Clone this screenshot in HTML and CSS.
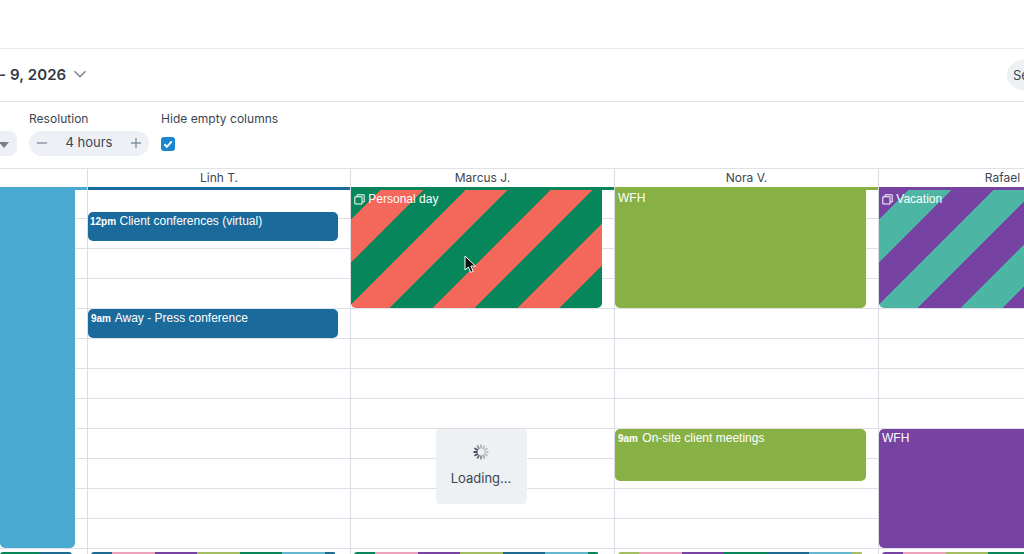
FILE: index.html
```html
<!DOCTYPE html>
<html lang="en">

<head>
    <meta charset="UTF-8">
    <meta name="viewport" content="width=device-width, initial-scale=1.0">
    <title>Schedule</title>
    <link rel="stylesheet" href="styles.css">
</head>

<body>
    <div class="top_bar"></div>

    <div class="title_bar">
        <div class="date_range">
            <span>- 9, 2026</span>
            <svg class="chevron" width="14" height="8" viewBox="0 0 14 8">
                <path d="M1.5 1.2 7 6.6l5.5-5.4" fill="none" stroke="#7c8894" stroke-width="1.5" />
            </svg>
        </div>
        <div class="search_pill">Se</div>
    </div>

    <div class="options">
        <div class="select_stub"><span class="caret"></span></div>
        <div class="option">
            <div class="option_label">Resolution</div>
            <div class="stepper">
                <svg width="12" height="12" viewBox="0 0 12 12">
                    <path d="M1 6h10" stroke="#8492a3" stroke-width="1.4" />
                </svg>
                <span class="stepper_value">4 hours</span>
                <svg width="12" height="12" viewBox="0 0 12 12">
                    <path d="M1 6h10M6 1v10" stroke="#8492a3" stroke-width="1.4" />
                </svg>
            </div>
        </div>
        <div class="option">
            <div class="option_label">Hide empty columns</div>
            <div class="checkbox">
                <svg width="10" height="10" viewBox="0 0 10 10">
                    <path d="M1.3 5.2 3.9 7.8 8.7 2.4" fill="none" stroke="#fff" stroke-width="2" />
                </svg>
            </div>
        </div>
    </div>

    <div class="schedule">
        <div class="col col_first">
            <div class="col_head"></div>
            <div class="col_body bar_sky">
                <div class="event full_left sky"></div>
                <div class="strip strip_first">
                    <span class="seg seg_end green"></span>
                    <span class="seg dark"></span>
                    <span class="seg seg_end light"></span>
                </div>
            </div>
        </div>

        <div class="col">
            <div class="col_head">Linh T.</div>
            <div class="col_body bar_blue">
                <div class="event short top_12pm blue"><b>12pm</b> Client conferences (virtual)</div>
                <div class="event short top_9am blue"><b>9am</b> Away - Press conference</div>
                <div class="strip">
                    <span class="seg seg_end dark"></span>
                    <span class="seg pink"></span>
                    <span class="seg purple"></span>
                    <span class="seg olive"></span>
                    <span class="seg green"></span>
                    <span class="seg light"></span>
                    <span class="seg seg_end dark"></span>
                </div>
            </div>
        </div>

        <div class="col">
            <div class="col_head">Marcus J.</div>
            <div class="col_body bar_green">
                <div class="event allday stripes_red">
                    <svg class="copy" width="11" height="11" viewBox="0 0 11 11">
                        <path d="M3 2.8V.8h7.2V8H8M.8 2.8H8V10H.8z" fill="none" stroke="#fff" stroke-width="1" />
                    </svg>
                    Personal day
                </div>
                <div class="strip">
                    <span class="seg seg_end green"></span>
                    <span class="seg pink"></span>
                    <span class="seg purple"></span>
                    <span class="seg olive"></span>
                    <span class="seg dark"></span>
                    <span class="seg light"></span>
                    <span class="seg seg_end green"></span>
                </div>
            </div>
            <div class="loading">
                <svg class="spinner" width="18" height="18" viewBox="0 0 18 18">
                    <g stroke="#2f3944" stroke-width="1.8">
                        <line x1="9" y1="1.5" x2="9" y2="5.5" opacity=".3" transform="rotate(0 9 9)" />
                        <line x1="9" y1="1.5" x2="9" y2="5.5" opacity=".25" transform="rotate(30 9 9)" />
                        <line x1="9" y1="1.5" x2="9" y2="5.5" opacity=".25" transform="rotate(60 9 9)" />
                        <line x1="9" y1="1.5" x2="9" y2="5.5" opacity=".25" transform="rotate(90 9 9)" />
                        <line x1="9" y1="1.5" x2="9" y2="5.5" opacity=".3" transform="rotate(120 9 9)" />
                        <line x1="9" y1="1.5" x2="9" y2="5.5" opacity=".4" transform="rotate(150 9 9)" />
                        <line x1="9" y1="1.5" x2="9" y2="5.5" opacity=".55" transform="rotate(180 9 9)" />
                        <line x1="9" y1="1.5" x2="9" y2="5.5" opacity=".7" transform="rotate(210 9 9)" />
                        <line x1="9" y1="1.5" x2="9" y2="5.5" opacity=".9" transform="rotate(240 9 9)" />
                        <line x1="9" y1="1.5" x2="9" y2="5.5" opacity="1" transform="rotate(270 9 9)" />
                        <line x1="9" y1="1.5" x2="9" y2="5.5" opacity=".85" transform="rotate(300 9 9)" />
                        <line x1="9" y1="1.5" x2="9" y2="5.5" opacity=".5" transform="rotate(330 9 9)" />
                    </g>
                </svg>
                <div>Loading...</div>
            </div>
            <svg class="cursor" width="13" height="19" viewBox="0 0 13 19">
                <path d="M1 1v14l3.4-3 2.3 5.4 2.5-1-2.3-5.3h4.6z" fill="#111" stroke="#fff" stroke-width="1" />
            </svg>
        </div>

        <div class="col">
            <div class="col_head">Nora V.</div>
            <div class="col_body bar_olive">
                <div class="event allday allday_plain olive_bg">WFH</div>
                <div class="event onsite olive_bg"><b>9am</b> On-site client meetings</div>
                <div class="strip">
                    <span class="seg seg_end olive"></span>
                    <span class="seg pink"></span>
                    <span class="seg purple"></span>
                    <span class="seg green"></span>
                    <span class="seg dark"></span>
                    <span class="seg light"></span>
                    <span class="seg seg_end olive"></span>
                </div>
            </div>
        </div>

        <div class="col">
            <div class="col_head col_head_cut">Rafael</div>
            <div class="col_body bar_purple">
                <div class="event allday stripes_teal">
                    <svg class="copy" width="11" height="11" viewBox="0 0 11 11">
                        <path d="M3 2.8V.8h7.2V8H8M.8 2.8H8V10H.8z" fill="none" stroke="#fff" stroke-width="1" />
                    </svg>
                    Vacation
                </div>
                <div class="event wfh purple_bg">WFH</div>
                <div class="strip">
                    <span class="seg seg_end purple"></span>
                    <span class="seg pink"></span>
                    <span class="seg olive"></span>
                    <span class="seg green"></span>
                </div>
            </div>
        </div>
    </div>
</body>

</html>
```

FILE: styles.css
```css
body {
    font-family: Inter, "Liberation Sans", sans-serif;
    margin: 0;
    height: 554px;
    overflow: hidden;
    background-color: #fff;
    color: #3b4653;
}

.top_bar {
    height: 48px;
    border-bottom: 1px solid #e8e9f1;
}

.title_bar {
    height: 52px;
    display: flex;
    align-items: center;
    justify-content: space-between;
    border-bottom: 1px solid #e0e2e6;
    overflow: hidden;
}

.date_range {
    display: flex;
    align-items: center;
    gap: 7px;
    margin: -2px 0 0 -1px;
    font-size: 15px;
    font-weight: 600;
    letter-spacing: 0.1px;
    color: #2f3a47;
}

.search_pill {
    flex-shrink: 0;
    width: 60px;
    height: 30px;
    box-sizing: border-box;
    margin: -1px -43px 0 0;
    padding-left: 6px;
    line-height: 30px;
    font-size: 13px;
    background-color: #edf0f4;
    border-radius: 15px;
}

.options {
    height: 66px;
    display: flex;
    gap: 12px;
    border-bottom: 1px solid #e0e2e6;
    overflow: hidden;
}

.select_stub {
    flex-shrink: 0;
    width: 40px;
    height: 25px;
    margin: 29px 0 0 -23px;
    display: flex;
    align-items: center;
    justify-content: flex-end;
    padding-right: 8px;
    box-sizing: border-box;
    background-color: #edf0f4;
    border-radius: 8px;
}

.caret {
    margin-top: 2px;
    border-top: 6px solid #75808c;
    border-left: 5px solid transparent;
    border-right: 5px solid transparent;
}

.option {
    padding-top: 9px;
}

.option_label {
    font-size: 12px;
    line-height: 15px;
    margin-bottom: 5px;
    letter-spacing: 0.03px;
}

.stepper {
    width: 120px;
    height: 25px;
    box-sizing: border-box;
    padding: 0 7px 1px;
    display: flex;
    align-items: center;
    justify-content: space-between;
    font-size: 13px;
    background-color: #edf0f4;
    border-radius: 13px;
}

.stepper_value {
    margin-bottom: 2px;
}

.checkbox {
    width: 14px;
    height: 14px;
    margin-top: 11px;
    display: flex;
    align-items: center;
    justify-content: center;
    background-color: #1a86cf;
    border-radius: 3px;
}

.schedule {
    display: grid;
    grid-template-columns: 87px 263px 264px 264px 264px;
    height: 385px;
    overflow: hidden;
}

.col {
    position: relative;
    border-left: 1px solid #dcdce6;
    min-width: 0;
}

.col_first {
    border-left: none;
}

.col_head {
    height: 18px;
    line-height: 17px;
    text-align: center;
    font-size: 12px;
}

.col_head_cut {
    padding-right: 16px;
}

.col_body {
    position: relative;
    height: 364px;
    border-top: 3px solid;
    background-image: linear-gradient(to bottom, transparent 29px, #dfe0e5 29px);
    background-size: 100% 30px;
    background-position: 0 -1px;
}

.bar_sky {
    border-top-color: #4aa9d0;
}

.bar_blue {
    border-top-color: #1b6a9c;
}

.bar_green {
    border-top-color: #0a8559;
}

.bar_olive {
    border-top-color: #88b145;
}

.bar_purple {
    border-top-color: #7743a3;
}

/* events sit on top of the hour lines */
.event {
    position: absolute;
    left: 0;
    width: 251px;
    box-sizing: border-box;
    padding: 2px 3px;
    font-family: "Liberation Sans", Arial, sans-serif;
    font-size: 12px;
    line-height: 14px;
    color: #fff;
    border-radius: 0 0 5px 5px;
}

.event b {
    font-size: 10px;
    margin-right: 1px;
}

.short {
    width: 250px;
    height: 29px;
    border-radius: 5px;
}

.top_12pm {
    top: 22px;
    padding-left: 2px;
}

.top_12pm b {
    margin-right: 0;
}

.top_9am {
    top: 119px;
}

.allday {
    top: 0;
    height: 118px;
}

.allday_plain {
    padding-top: 1px;
}

.onsite {
    top: 239px;
    height: 52px;
    border-radius: 5px;
}

.wfh {
    top: 239px;
    height: 119px;
    border-radius: 5px;
}

.full_left {
    width: 75px;
    height: 358px;
    top: 0;
}

.sky {
    background-color: #4aa9d0;
}

.blue {
    background-color: #1b6a9c;
}

.olive_bg {
    background-color: #88b145;
}

.purple_bg {
    background-color: #7743a3;
}

.stripes_red {
    background: repeating-linear-gradient(135deg, #06865a 0 21px, #f4675b 21px 51px, #06865a 51px 60px);
}

.stripes_teal {
    background: repeating-linear-gradient(135deg, #7743a3 0 21px, #4db5a3 21px 51px, #7743a3 51px 60px);
}

.copy {
    vertical-align: -2px;
}

.strip {
    position: absolute;
    top: 362px;
    left: 3px;
    width: 245px;
    height: 6px;
    display: flex;
    overflow: hidden;
    border-radius: 3px 3px 0 0;
}

.strip_first {
    left: 0;
    width: 72px;
}

.seg {
    flex: 0 0 42.5px;
}

.seg_end {
    flex: 0 0 21px;
}

.strip .seg_end:last-child {
    flex: 0 0 10.5px;
}

.strip_first .seg_end:last-child {
    flex: 0 0 12px;
}

.strip_first .seg {
    flex-basis: 39px;
}

.green {
    background-color: #0a8559;
}

.dark {
    background-color: #1f6a8f;
}

.light {
    background-color: #66b8d0;
}

.pink {
    background-color: #eda3bb;
}

.purple {
    background-color: #7743a3;
}

.olive {
    background-color: #a5bd62;
}

.loading {
    position: absolute;
    top: 260px;
    left: 85px;
    width: 91px;
    height: 75px;
    box-sizing: border-box;
    padding: 14px 1px 0 0;
    text-align: center;
    font-size: 13px;
    background-color: #edf1f4;
    border-radius: 4px;
}

.spinner {
    display: block;
    margin: 0 auto 9px;
}

.cursor {
    position: absolute;
    top: 86px;
    left: 113px;
}
```
